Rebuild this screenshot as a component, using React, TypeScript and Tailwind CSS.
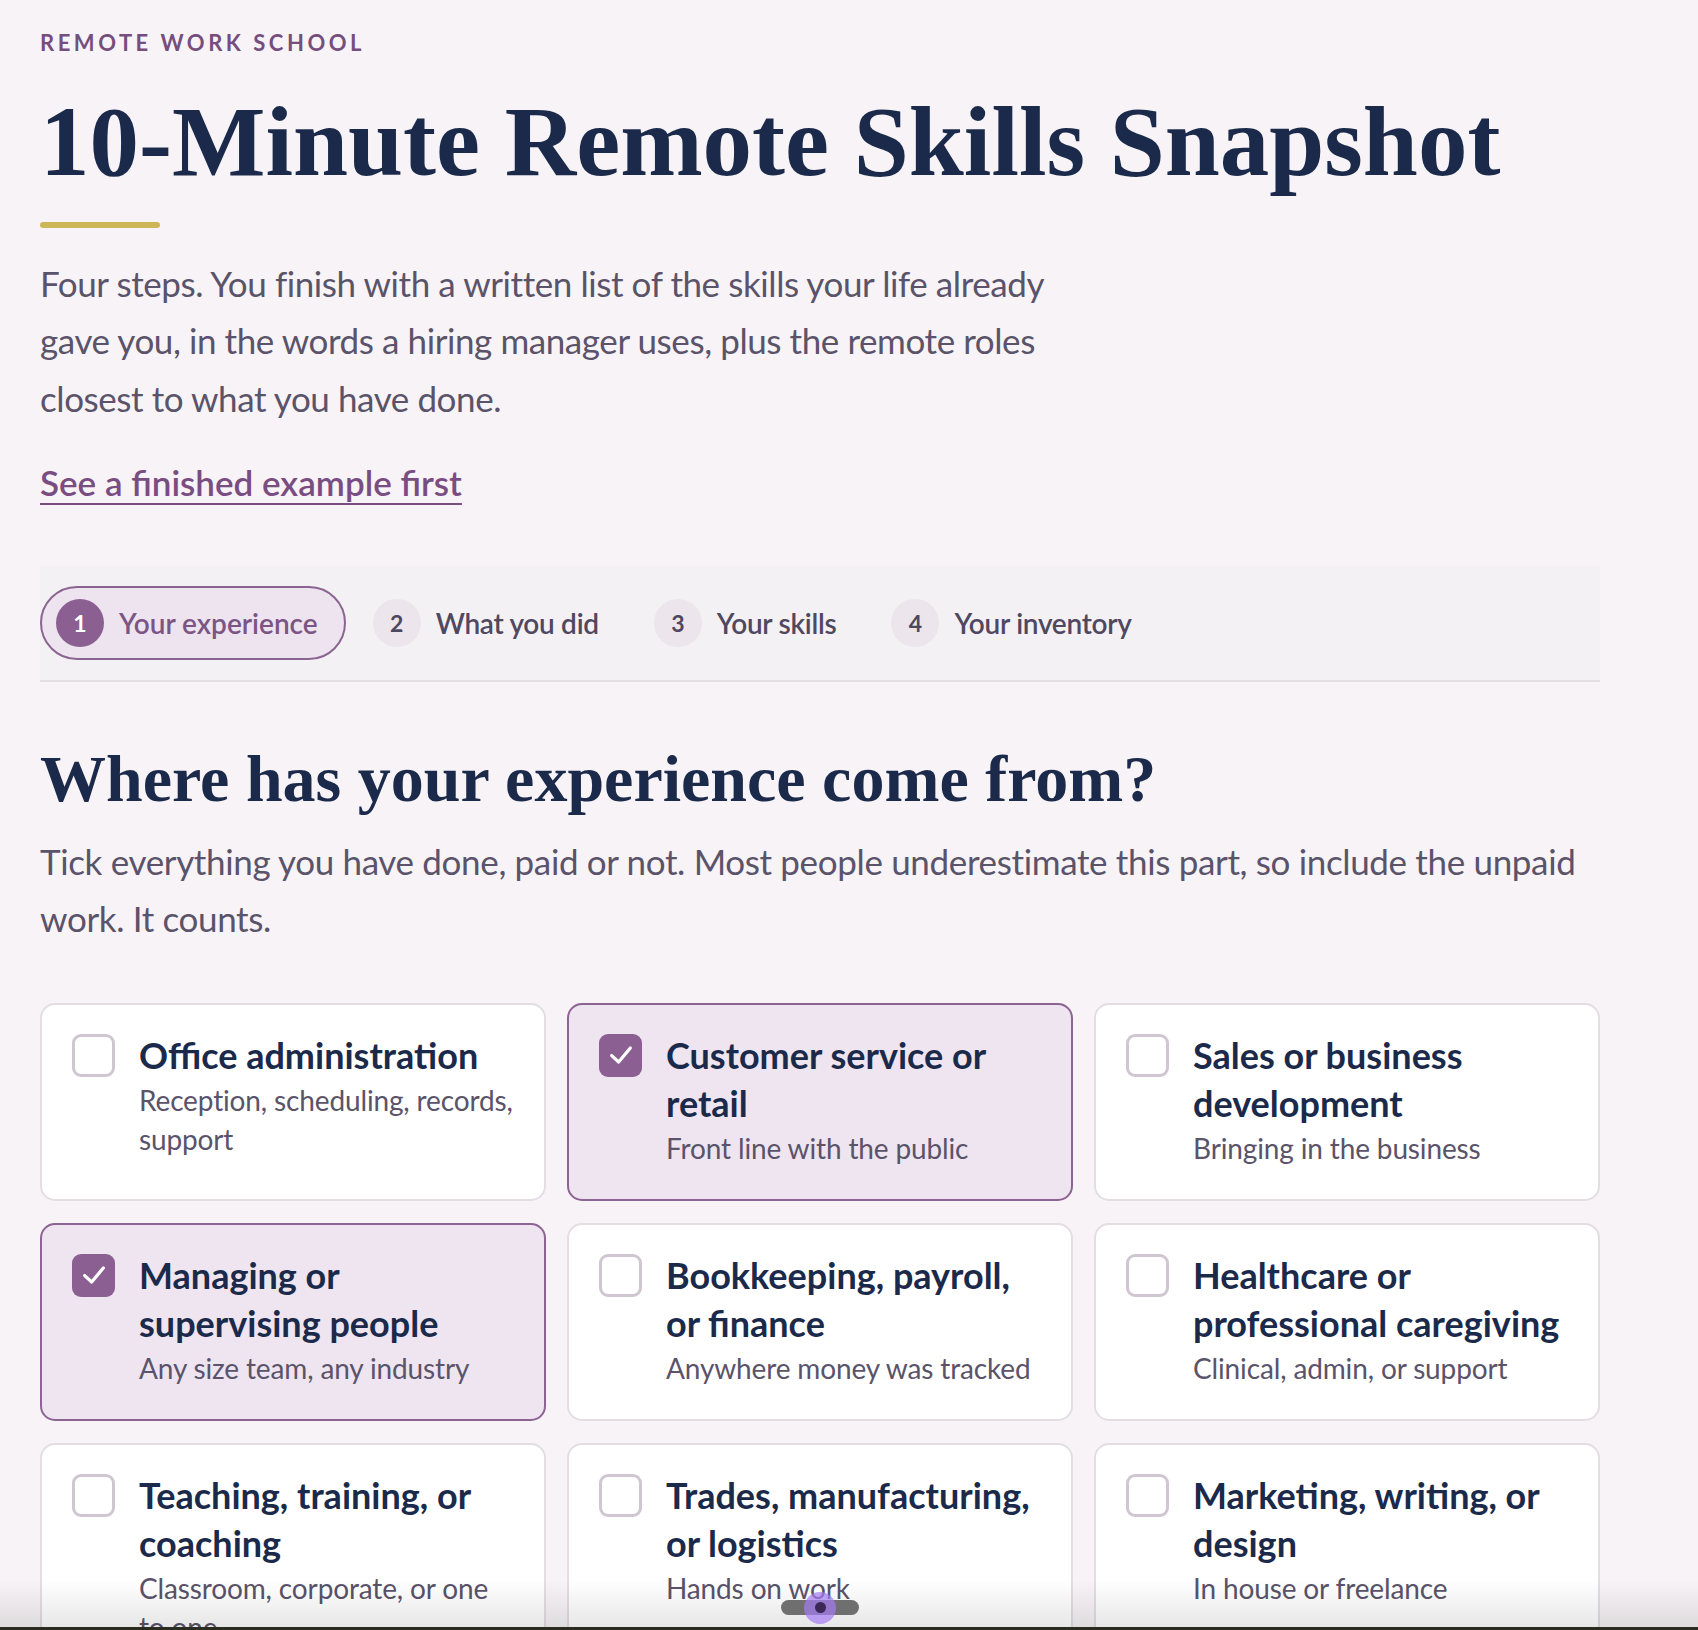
import React from "react";

const steps = [
  { n: 1, label: "Your experience", active: true },
  { n: 2, label: "What you did", active: false },
  { n: 3, label: "Your skills", active: false },
  { n: 4, label: "Your inventory", active: false },
];

const areas = [
  { title: "Office administration", desc: "Reception, scheduling, records, support", checked: false },
  { title: "Customer service or retail", desc: "Front line with the public", checked: true },
  { title: "Sales or business development", desc: "Bringing in the business", checked: false },
  { title: "Managing or supervising people", desc: "Any size team, any industry", checked: true },
  { title: "Bookkeeping, payroll, or finance", desc: "Anywhere money was tracked", checked: false },
  { title: "Healthcare or professional caregiving", desc: "Clinical, admin, or support", checked: false },
  { title: "Teaching, training, or coaching", desc: "Classroom, corporate, or one to one", checked: false },
  { title: "Trades, manufacturing, or logistics", desc: "Hands on work", checked: false },
  { title: "Marketing, writing, or design", desc: "In house or freelance", checked: false },
];

const Check = () => (
  <svg viewBox="0 0 24 24" className="h-[28px] w-[28px]" fill="none">
    <path d="M4 12.5L10 18L20 6" stroke="white" strokeWidth="2.8" strokeLinecap="round" strokeLinejoin="round" />
  </svg>
);

const App = () => {
  return (
    <div className="min-h-screen bg-[#f7f3f6] font-['Lato',sans-serif]">
      <div className="mx-10 w-[1560px] pt-[26px] pb-20">
        {/* Eyebrow */}
        <p className="text-[22px] leading-[33px] font-bold uppercase tracking-[0.16em] text-[#754e7d]">
          Remote Work School
        </p>

        {/* Title */}
        <h1 className="mt-[29px] font-['Liberation_Serif',serif] text-[99px] leading-[1.1] font-bold text-[#1b2a4b]">
          10-Minute Remote Skills Snapshot
        </h1>
        <div className="mt-[25px] h-[6px] w-[120px] rounded-full bg-[#cdb656]"></div>

        <p className="mt-[27px] max-w-[1080px] text-[35px] leading-[57.5px] tracking-[-0.012em] text-[#5a536a]">
          Four steps. You finish with a written list of the skills your life already gave you, in the words a
          hiring manager uses, plus the remote roles closest to what you have done.
        </p>

        <a
          href="#"
          className="mt-7 inline-block text-[35px] leading-[54px] font-semibold text-[#7a4d82] underline decoration-2 underline-offset-[7px]"
        >
          See a finished example first
        </a>

        {/* Steps */}
        <div className="mt-[57px] flex items-center gap-[11px] border-b-2 border-[#e3dee3] bg-[#f3f1f3] py-5">
          {steps.map((s) => (
            <div
              key={s.n}
              className={
                s.active
                  ? "flex items-center gap-[15px] rounded-full border-2 border-[#8b6592] bg-[#eee4ef] py-[11px] pl-[14px] pr-[26px]"
                  : "flex items-center gap-[15px] rounded-full border-2 border-transparent py-[11px] pl-[14px] pr-[26px]"
              }
            >
              <span
                className={
                  s.active
                    ? "flex h-12 w-12 items-center justify-center rounded-full bg-[#8b5f91] text-[23px] font-bold text-white"
                    : "flex h-12 w-12 items-center justify-center rounded-full bg-[#ece5ec] text-[23px] font-bold text-[#4e4760]"
                }
              >
                {s.n}
              </span>
              <span
                className={
                  s.active
                    ? "text-[28px] font-semibold text-[#7b5583]"
                    : "text-[28px] font-semibold tracking-[-0.01em] text-[#4f4860]"
                }
              >
                {s.label}
              </span>
            </div>
          ))}
        </div>

        {/* Question */}
        <h2 className="mt-[57px] font-['Liberation_Serif',serif] text-[66px] leading-[1.2] font-bold text-[#1b2a4b]">
          Where has your experience come from?
        </h2>
        <p className="mt-[14px] text-[35px] leading-[57.5px] tracking-[-0.01em] text-[#5a536a]">
          Tick everything you have done, paid or not. Most people underestimate this part, so include the unpaid
          work. It counts.
        </p>

        {/* Options */}
        <div className="mt-[55px] grid grid-cols-3 gap-x-[21px] gap-y-[22px]">
          {areas.map((a) => (
            <label
              key={a.title}
              className={
                a.checked
                  ? "flex gap-6 rounded-[15px] border-2 border-[#8c6393] bg-[#eee5f0] px-[30px] pt-[26px] pb-[31px]"
                  : "flex gap-6 rounded-[15px] border-2 border-[#e4dee4] bg-white px-[30px] pt-[26px] pb-[31px]"
              }
            >
              {a.checked ? (
                <span className="mt-[3px] flex h-[43px] w-[43px] shrink-0 items-center justify-center rounded-[9px] bg-[#8b5f91]">
                  <Check />
                </span>
              ) : (
                <span className="mt-[3px] h-[43px] w-[43px] shrink-0 rounded-[9px] border-[3px] border-[#d0c6d1] bg-white"></span>
              )}
              <span className="flex flex-col">
                <span className="text-[36px] leading-[48px] font-bold text-[#1b2a4b]">{a.title}</span>
                <span className="mt-0.5 text-[28px] leading-[39px] tracking-[-0.005em] text-[#5a536a]">{a.desc}</span>
              </span>
            </label>
          ))}
        </div>
      </div>

      {/* Bottom fade and scroll indicator */}
      <div className="pointer-events-none fixed inset-x-0 bottom-0 h-[50px] bg-gradient-to-b from-transparent to-black/10"></div>
      <div className="pointer-events-none fixed inset-x-0 bottom-0 h-[3px] bg-[#2a2c22]"></div>
      <div className="pointer-events-none fixed bottom-[15px] left-[781px] flex h-[15px] w-[78px] items-center justify-center rounded-full bg-[#6f6f6f]">
        <span className="flex h-[32px] w-[32px] items-center justify-center rounded-full bg-[#a57cf2]/70">
          <span className="h-[11px] w-[11px] rounded-full bg-[#3b2858]"></span>
        </span>
      </div>
    </div>
  );
};

export default App;
